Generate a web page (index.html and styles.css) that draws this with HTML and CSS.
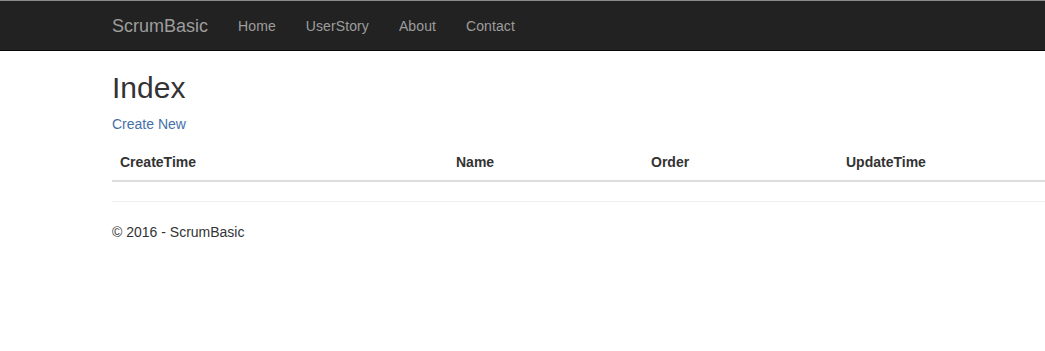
FILE: index.html
```html
<!DOCTYPE html>
<html>
    <head>
        <meta charset="utf-8" />
        <title>Index - ScrumBasic</title>
        <link rel="stylesheet" href="styles.css">
    </head>

    <body>
        <div class="navbar">
            <div class="container navbar-inner">
                <a class="navbar-brand" href="#">ScrumBasic</a>
                <ul class="nav">
                    <li><a href="#">Home</a></li>
                    <li><a href="#">UserStory</a></li>
                    <li><a href="#">About</a></li>
                    <li><a href="#">Contact</a></li>
                </ul>
            </div>
        </div>

        <div class="container body-content">
            <h2>Index</h2>

            <p><a href="#">Create New</a></p>

            <table class="table">
                <tr>
                    <th class="col-create">CreateTime</th>
                    <th class="col-name">Name</th>
                    <th class="col-order">Order</th>
                    <th class="col-update">UpdateTime</th>
                    <th></th>
                </tr>
            </table>

            <hr />
            <footer>
                <p>&copy; 2016 - ScrumBasic</p>
            </footer>
        </div>
    </body>
</html>
```

FILE: styles.css
```css
html{
    overflow: hidden;
}
body{
    margin: 0;
    font-family: "Liberation Sans", Arial, sans-serif;
    font-size: 14px;
    line-height: 20px;
    color: #333;
    background-color: #fff;
}
a{
    color: #4470a8;
    text-decoration: none;
}
.container{
    width: 1140px;
    padding: 0 15px;
    margin-left: 97px;
}
.navbar{
    background-color: #222;
    border-top: 1px solid #8c8c8c;
    border-bottom: 1px solid #080808;
    height: 49px;
}
.navbar-inner{
    display: flex;
    align-items: center;
    height: 49px;
}
.navbar-brand{
    color: #9d9d9d;
    font-size: 18px;
    line-height: 20px;
    padding: 15px 15px 15px 0;
}
.nav{
    display: flex;
    list-style: none;
    margin: 0;
    padding: 0;
}
.nav a{
    display: block;
    color: #9d9d9d;
    padding: 15px;
    letter-spacing: 0.1px;
}
h2{
    font-size: 30px;
    font-weight: normal;
    line-height: 33px;
    margin: 20px 0 10px;
}
p{
    margin: 0 0 10px;
}
.table{
    width: 1140px;
    border-collapse: collapse;
    margin-bottom: 19px;
}
.table th{
    text-align: left;
    padding: 8px;
    line-height: 20px;
    border-bottom: 2px solid #ddd;
}
.col-create{
    width: 320px;
}
.col-name,
.col-order,
.col-update{
    width: 179px;
}
hr{
    border: 0;
    border-top: 1px solid #eee;
    margin: 19px 0 20px;
}
```
